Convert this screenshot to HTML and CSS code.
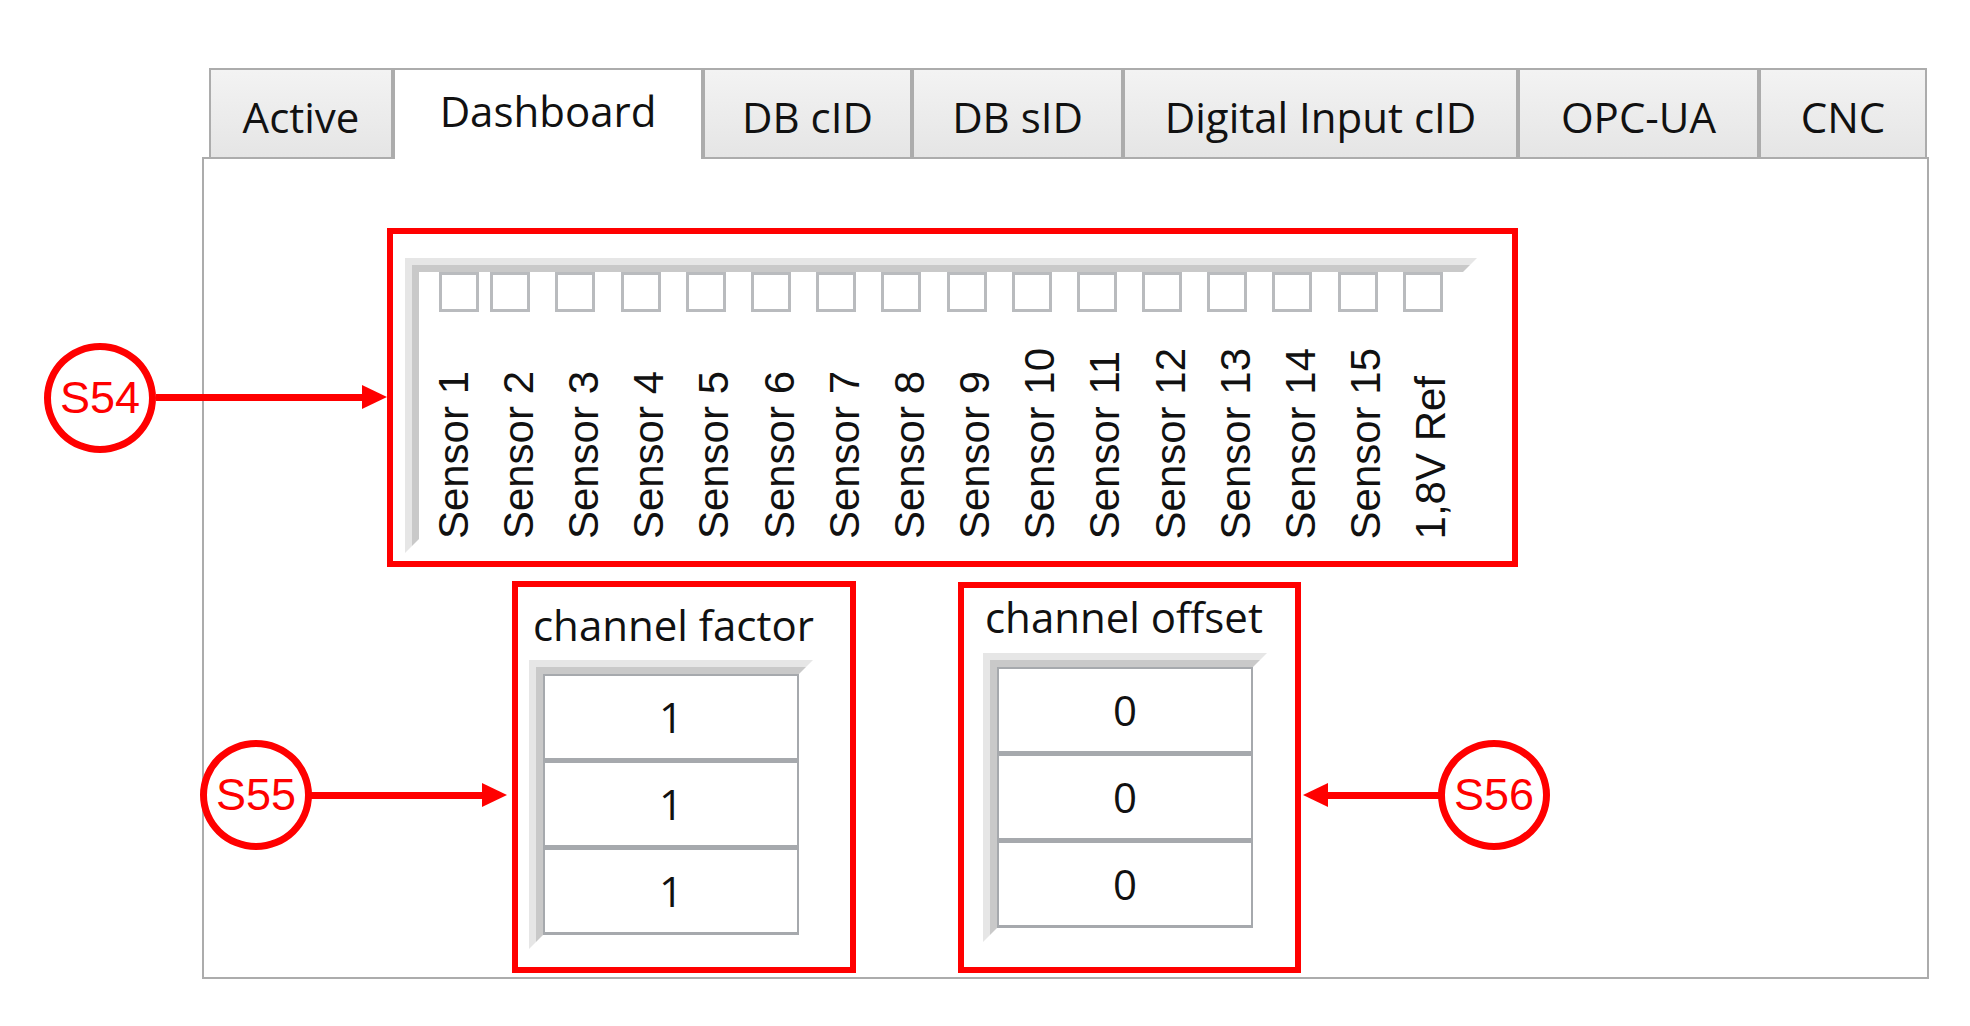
FILE: index.html
```html
<!DOCTYPE html>
<html lang="en">
<head>
  <meta charset="UTF-8"/>
  <title>Dashboard</title>
  <link rel="stylesheet" href="styles.css">
</head>
<body>
<div class="page">
  <div class="window">
    <div class="tabs">
      <div class="tab">Active</div>
      <div class="tab selected">Dashboard</div>
      <div class="tab">DB cID</div>
      <div class="tab">DB sID</div>
      <div class="tab">Digital Input cID</div>
      <div class="tab">OPC-UA</div>
      <div class="tab">CNC</div>
    </div>

    <div class="panel">
      <!-- S54 : sensor leds -->
      <div class="mark sensors-mark">
        <div class="sunken sensors-frame">
          <div class="sunken-in sensors">
            <div class="sensor"><span class="led"></span><span class="sensor-name">Sensor 1</span></div>
            <div class="sensor"><span class="led"></span><span class="sensor-name">Sensor 2</span></div>
            <div class="sensor"><span class="led"></span><span class="sensor-name">Sensor 3</span></div>
            <div class="sensor"><span class="led"></span><span class="sensor-name">Sensor 4</span></div>
            <div class="sensor"><span class="led"></span><span class="sensor-name">Sensor 5</span></div>
            <div class="sensor"><span class="led"></span><span class="sensor-name">Sensor 6</span></div>
            <div class="sensor"><span class="led"></span><span class="sensor-name">Sensor 7</span></div>
            <div class="sensor"><span class="led"></span><span class="sensor-name">Sensor 8</span></div>
            <div class="sensor"><span class="led"></span><span class="sensor-name">Sensor 9</span></div>
            <div class="sensor"><span class="led"></span><span class="sensor-name">Sensor 10</span></div>
            <div class="sensor"><span class="led"></span><span class="sensor-name">Sensor 11</span></div>
            <div class="sensor"><span class="led"></span><span class="sensor-name">Sensor 12</span></div>
            <div class="sensor"><span class="led"></span><span class="sensor-name">Sensor 13</span></div>
            <div class="sensor"><span class="led"></span><span class="sensor-name">Sensor 14</span></div>
            <div class="sensor"><span class="led"></span><span class="sensor-name">Sensor 15</span></div>
            <div class="sensor"><span class="led"></span><span class="sensor-name">1,8V Ref</span></div>
          </div>
        </div>
      </div>

      <div class="channels">
        <!-- S55 -->
        <div class="mark channel factor">
          <div class="channel-title">channel factor</div>
          <div class="sunken channel-frame">
            <div class="sunken-in">
              <div class="cell">1</div>
              <div class="cell">1</div>
              <div class="cell">1</div>
            </div>
          </div>
        </div>
        <!-- S56 -->
        <div class="mark channel offset">
          <div class="channel-title">channel offset</div>
          <div class="sunken channel-frame">
            <div class="sunken-in">
              <div class="cell">0</div>
              <div class="cell">0</div>
              <div class="cell">0</div>
            </div>
          </div>
        </div>
      </div>
    </div>
  </div>

  <!-- annotations -->
  <div class="callout c54">S54</div>
  <div class="arrow right a54"></div>
  <div class="callout c55">S55</div>
  <div class="arrow right a55"></div>
  <div class="callout c56">S56</div>
  <div class="arrow left a56"></div>
</div>
</body>
</html>
```

FILE: styles.css
```css
body { margin: 0; background: #fff; color: #111; font-family: "Open Sans", sans-serif; }
.page { position: relative; width: 1970px; height: 1026px; overflow: hidden; }

.window { margin-left: 202px; padding-top: 68px; width: 1727px; }

/* tabs */
.tabs {
  display: grid;
  grid-template-columns: 184px 310px 209px 211px 395px 241px 168px;
  align-items: start;
  height: 89px;
  padding-left: 7px;
}
.tab {
  box-sizing: border-box;
  height: 89px;
  padding-top: 7px;
  border: 2px solid #acacac;
  border-bottom: none;
  background: linear-gradient(#f3f3f3, #e5e5e5);
  font-size: 42px;
  line-height: 80px;
  text-align: center;
  white-space: nowrap;
  color: #111;
}
.tab.selected {
  position: relative;
  z-index: 1;
  height: 91px;
  padding-top: 1px;
  background: #fff;
}

.panel {
  box-sizing: border-box;
  height: 822px;
  border: 2px solid #acacac;
  background: #fff;
}

/* red annotation boxes */
.mark { box-sizing: border-box; border: 6px solid #ff0000; }

/* sunken LabVIEW style frames */
.sunken {
  box-sizing: border-box;
  border: 7px solid transparent;
  border-top-color: #e6e6e6;
  border-left-color: #e6e6e6;
}
.sunken-in {
  border: 7px solid transparent;
  border-top-color: #c9c9c9;
  border-left-color: #c9c9c9;
}

/* S54 */
.sensors-mark { width: 1131px; height: 339px; margin: 69px 0 0 183px; padding: 24px 0 0 12px; }
.sensors-frame { width: 1072px; height: 295px; }
.sensors { display: flex; height: 267px; padding-left: 2px; }
.sensor { width: 65.2px; flex: none; display: flex; flex-direction: column; }
.led {
  box-sizing: border-box;
  width: 40px;
  height: 40px;
  margin-left: 4px;
  border: 3px solid #b9bbbe;
  background: #fff;
}
.sensor:first-child .led { margin-left: 18px; }
.sensor-name {
  align-self: center;
  margin-top: auto;
  width: 42px;
  writing-mode: vertical-rl;
  transform: rotate(180deg);
  font-family: "Liberation Sans", Arial, sans-serif;
  font-size: 42px;
  line-height: 42px;
  white-space: nowrap;
}

/* S55 / S56 */
.channels { display: flex; gap: 102px; margin-top: 14px; padding-left: 308px; align-items: flex-start; }
.channel { width: 344px; height: 392px; padding-top: 13px; }
.channel.offset { width: 343px; height: 391px; margin-top: 1px; padding-top: 4px; }
.channel-title { padding-left: 15px; font-size: 42px; line-height: 50px; white-space: nowrap; }
.offset .channel-title { padding-left: 21px; }
.channel-frame { width: 284px; margin: 10px 0 0 11px; }
.offset .channel-frame { margin: 11px 0 0 19px; }
.cell {
  box-sizing: border-box;
  height: 87px;
  border: 2px solid #a6a9ad;
  border-bottom-width: 3px;
  background: #fff;
  font-size: 42px;
  line-height: 82px;
  text-align: center;
}

/* callouts */
.callout {
  position: absolute;
  box-sizing: border-box;
  width: 112px;
  height: 110px;
  border: 7px solid #ff0000;
  border-radius: 50%;
  background: #fff;
  color: #ff0000;
  font-family: "Liberation Sans", Arial, sans-serif;
  font-size: 45px;
  display: flex;
  align-items: center;
  justify-content: center;
}
.c54 { left: 44px; top: 343px; }
.c55 { left: 200px; top: 740px; }
.c56 { left: 1438px; top: 740px; }

.arrow { position: absolute; height: 7px; background: #ff0000; }
.arrow::after { content: ""; position: absolute; top: -9px; border-top: 12.5px solid transparent; border-bottom: 12.5px solid transparent; }
.arrow.right::after { right: -25px; border-left: 25px solid #ff0000; }
.arrow.left::after { left: -25px; border-right: 25px solid #ff0000; }
.a54 { left: 156px; top: 394px; width: 206px; }
.a55 { left: 311px; top: 792px; width: 171px; }
.a56 { left: 1328px; top: 792px; width: 111px; }
```
